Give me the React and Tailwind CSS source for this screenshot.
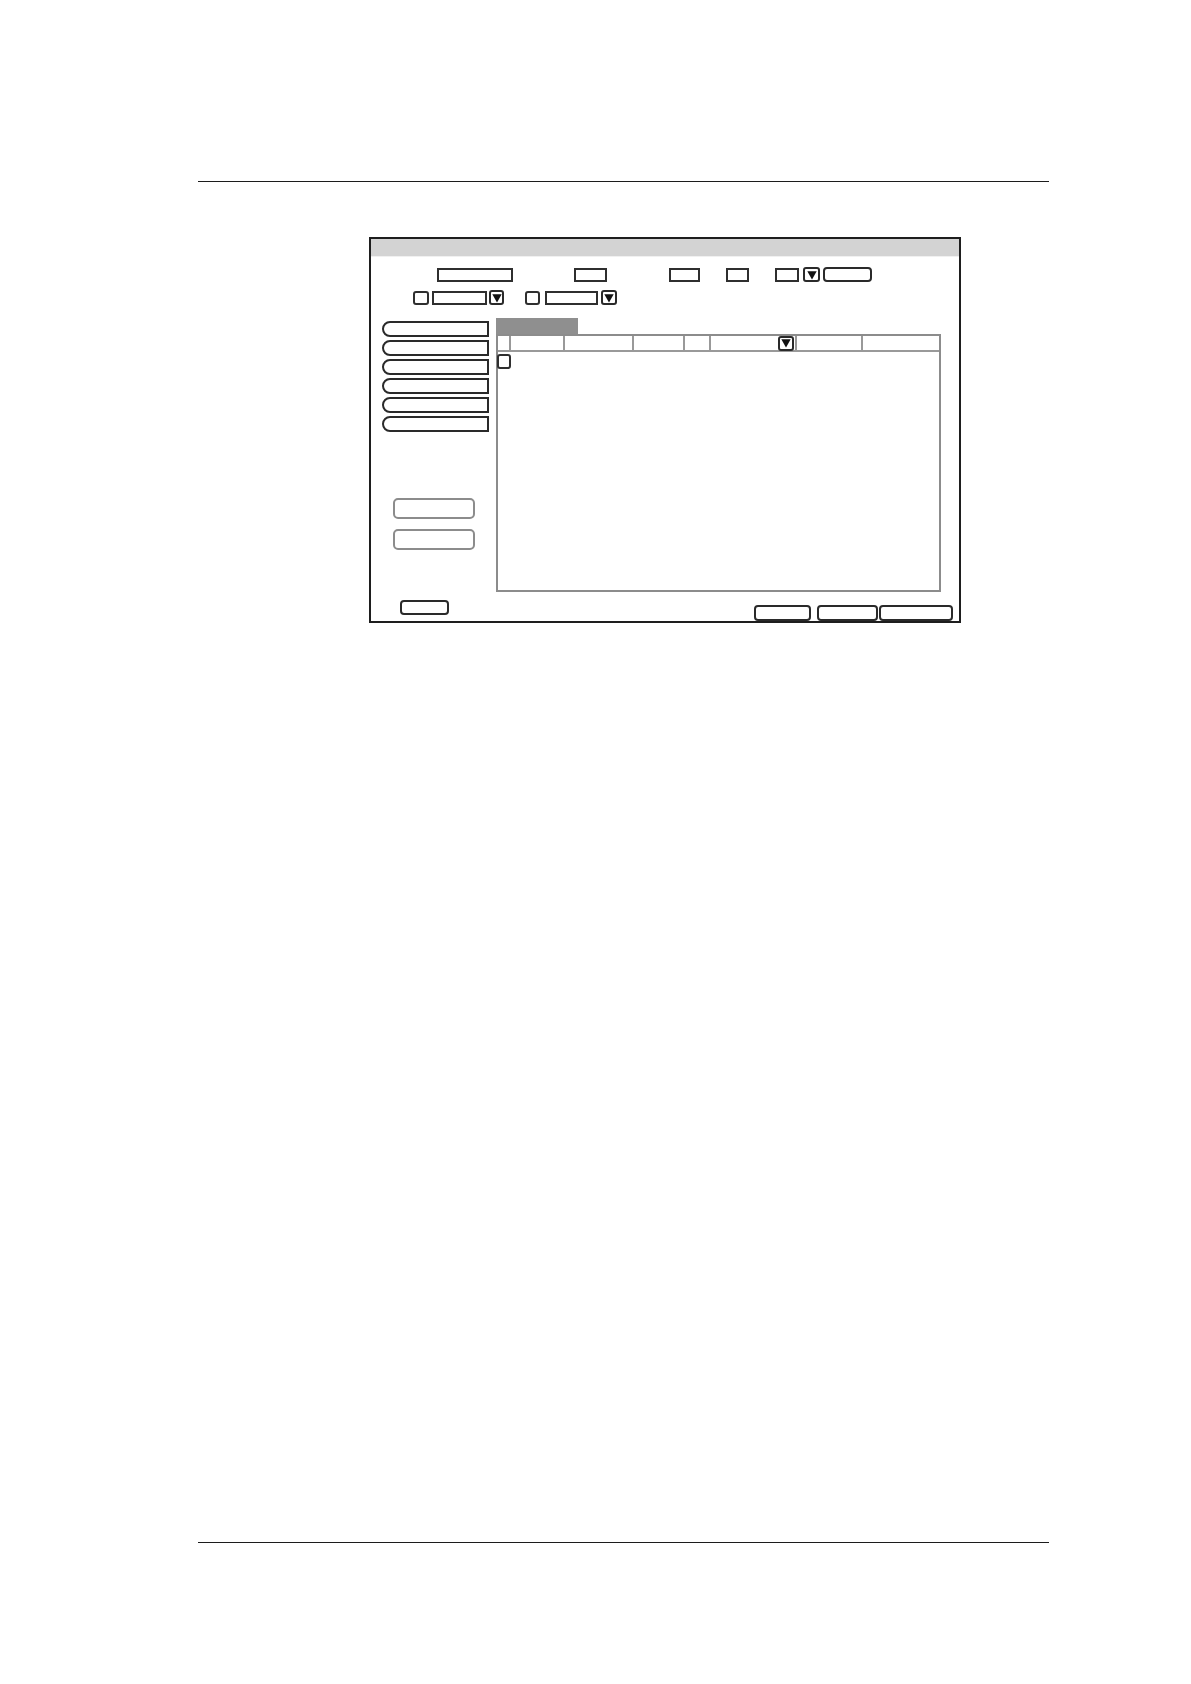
const dark = "border-2 border-[#2a2a2a]";

function Field({ w }) {
  return <div className={`h-[14px] bg-white border-2 border-[#2f2f2f] ${w}`} />;
}

function Drop({ w = "w-[15px]", h = "h-[15px]" }) {
  return (
    <div className={`${w} ${h} rounded-[3px] border-2 border-[#2a2a2a] flex items-center justify-center bg-white`}>
      <svg viewBox="0 0 10 10" className="w-[10px] h-[10px]">
        <polygon points="0.3,1.2 9.7,1.2 5,9.6" fill="#111" />
      </svg>
    </div>
  );
}

function Check({ w = "w-[15px]", h = "h-[14px]" }) {
  return <div className={`${w} ${h} rounded-[3px] border-2 border-[#2f2f2f] bg-white`} />;
}

const cols = [
  { w: "w-[13px]" },
  { w: "w-[54px]" },
  { w: "w-[69px]" },
  { w: "w-[51px]" },
  { w: "w-[26px]" },
  { w: "w-[86px]", drop: true },
  { w: "w-[66px]" },
  { w: "flex-1", last: true },
];

export default function App() {
  return (
    <div className="w-[1191px] min-h-[1684px] bg-white flex flex-col pt-[181px]">
      <div className="ml-[198px] w-[851px] h-px bg-[#1c1c1c]" />

      <div className="ml-[369px] mt-[55px] w-[592px] h-[386px] border-2 border-[#1e1e1e] flex flex-col bg-white">
        <div className="h-[18px] bg-[#d3d3d3] border-b border-[#f0f0f0]" />

        {/* row 1 */}
        <div className="flex items-center mt-[10px] pl-[66px] h-[15px]">
          <Field w="w-[76px]" />
          <div className="ml-[61px]"><Field w="w-[33px]" /></div>
          <div className="ml-[62px]"><Field w="w-[31px]" /></div>
          <div className="ml-[26px]"><Field w="w-[23px]" /></div>
          <div className="ml-[26px]"><Field w="w-[24px]" /></div>
          <div className="ml-[4px]"><Drop w="w-[17px]" /></div>
          <div className={`ml-[3px] w-[49px] h-[15px] rounded-[4px] ${dark}`} />
        </div>

        {/* row 2 */}
        <div className="flex items-center mt-[8px] pl-[42px] h-[15px]">
          <Check w="w-[16px]" />
          <div className="ml-[3px]"><Field w="w-[55px]" /></div>
          <div className="ml-[2px]"><Drop /></div>
          <div className="ml-[21px]"><Check /></div>
          <div className="ml-[5px]"><Field w="w-[53px]" /></div>
          <div className="ml-[3px]"><Drop w="w-[16px]" /></div>
        </div>

        {/* main */}
        <div className="flex mt-[13px] h-[274px]">
          <div className="ml-[11px] w-[107px] flex flex-col">
            <div className="mt-[3px] flex flex-col gap-[3px]">
              {[0, 1, 2, 3, 4, 5].map((i) => (
                <div key={i} className={`h-[16px] rounded-l-[8px] bg-white ${dark}`} />
              ))}
            </div>
            <div className="mt-[66px] ml-[11px] flex flex-col gap-[10px]">
              <div className="w-[82px] h-[21px] rounded-[5px] border-2 border-[#8c8c8c]" />
              <div className="w-[82px] h-[21px] rounded-[5px] border-2 border-[#8c8c8c]" />
            </div>
          </div>

          <div className="ml-[7px] w-[445px] flex flex-col">
            <div className="w-[82px] h-[16px] bg-[#8f8f8f]" />
            <div className="flex-1 border-2 border-[#8c8c8c] flex flex-col">
              <div className="flex h-[16px] border-b-2 border-[#999]">
                {cols.map((c, i) => (
                  <div
                    key={i}
                    className={`${c.w} h-full ${c.last ? "" : "border-r-2 border-[#999]"} flex items-center justify-end pr-[1px]`}
                  >
                    {c.drop && <Drop w="w-[16px]" h="h-[15px]" />}
                  </div>
                ))}
              </div>
              <div className="mt-[2px] -ml-[1px]">
                <Check w="w-[14px]" h="h-[15px]" />
              </div>
            </div>
          </div>
        </div>

        {/* bottom row */}
        <div className="flex items-start justify-between">
          <div className={`ml-[29px] mt-[8px] w-[49px] h-[15px] rounded-[4px] ${dark}`} />
          <div className="mt-[13px] mr-[6px] flex">
            <div className={`w-[57px] h-[16px] rounded-[4px] ${dark}`} />
            <div className={`ml-[6px] w-[61px] h-[16px] rounded-[4px] ${dark}`} />
            <div className={`ml-[1px] w-[74px] h-[16px] rounded-[4px] ${dark}`} />
          </div>
        </div>
      </div>

      <div className="ml-[198px] mt-[919px] w-[851px] h-px bg-[#1c1c1c]" />
    </div>
  );
}
